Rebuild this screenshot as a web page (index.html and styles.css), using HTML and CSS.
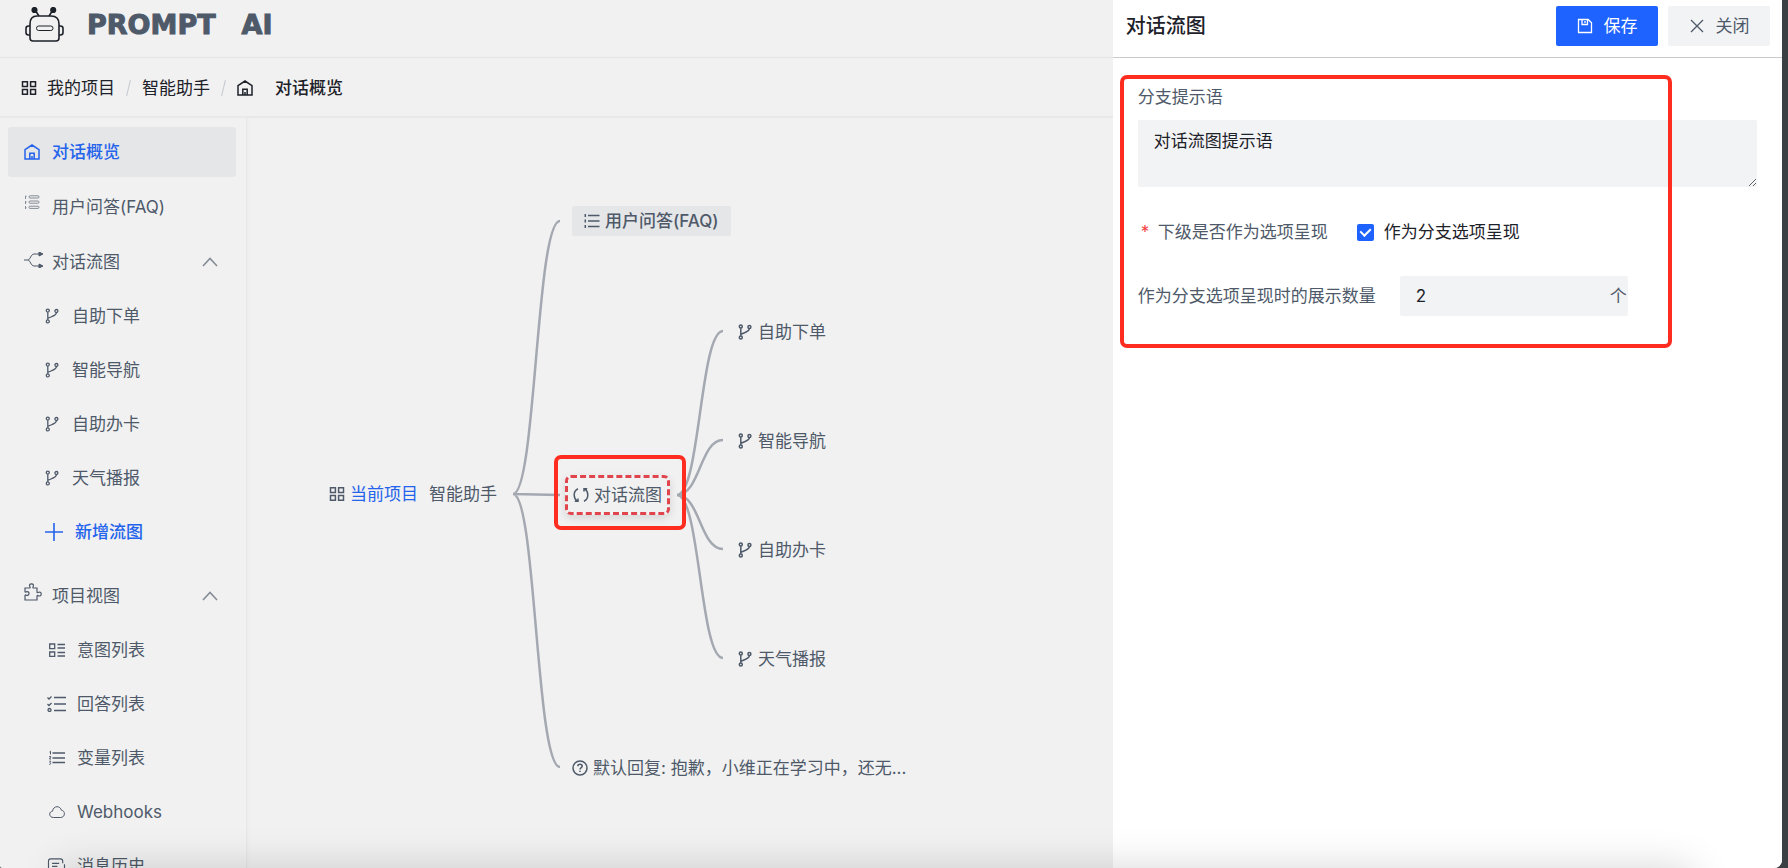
FILE: index.html
```html
<!DOCTYPE html>
<html lang="zh-CN">
<head>
<meta charset="utf-8">
<title>对话概览 - PROMPT AI</title>
<link rel="stylesheet" href="styles.css">
</head>
<body>
<svg class="defs" aria-hidden="true">
  <symbol id="i-home" viewBox="0 0 16 16"><path d="M1 5.6 8 1l7 4.6V15H1zM5.8 15V9.2h4.4V15M8 12v3"/></symbol>
  <symbol id="i-apps" viewBox="0 0 16 16"><path d="M1.5 1.7h4.9v4.9H1.5zM9.6 1.7h4.9v4.9H9.6zM1.5 9.4h4.9v4.9H1.5zM9.6 9.4h4.9v4.9H9.6z"/></symbol>
  <symbol id="i-branch" viewBox="0 0 16 16"><circle cx="3.8" cy="2.6" r="1.5"/><circle cx="3.8" cy="13.4" r="1.5"/><circle cx="12.4" cy="3" r="1.5"/><path d="M3.8 4.2v7.6M12.4 4.6C12.4 8 7 8.600 3.8 10.400"/></symbol>
  <symbol id="i-up" viewBox="0 0 16 16"><path d="m1 12 7-7.500 7 7.500"/></symbol>
  <symbol id="i-list" viewBox="0 0 16 16"><path d="M4 2.500h11.500M4 8h11.500M4 13.500h11.500M1.300 1v3M1.300 6.500v3M1.300 12v3"/></symbol>
</svg>
<div class="app">
  <header class="top">
    <svg class="robot" viewBox="0 0 40 36" aria-hidden="true">
      <path d="M10 3l4 6M28 3l-4 6" /><circle class="solid" cx="9.500" cy="3" r="2.300"/><circle class="solid" cx="28.200" cy="3" r="2.300"/>
      <path d="M12 9h14c5 0 8 3 8 8v14c0 2-1 3-3 3H8c-2 0-3-1-3-3V17c0-5 2.500-8 7-8z"/>
      <path d="M5 19H3.500C1.800 19 1 20 1 21.500v4C1 27.500 2 28 3.500 28H5M34 19h1.500c1.700 0 2.500 1 2.500 2.500v4c0 2-1 2.500-2.500 2.500H34"/>
      <rect class="thin" x="11.500" y="19" width="16.500" height="4.500" rx="2.200"/>
    </svg>
    <span class="brand"><span>PROMPT</span><span>AI</span></span>
  </header>
  <nav class="crumbs" aria-label="路径">
    <svg class="ic"><use href="#i-apps"/></svg>
    <a href="#projects">我的项目</a><i class="sep"></i><a href="#assistant">智能助手</a><i class="sep"></i>
    <svg class="ic home"><use href="#i-home"/></svg>
    <strong>对话概览</strong>
  </nav>
  <div class="work">
    <nav class="side" aria-label="菜单">
      <a class="item active" href="#overview"><svg class="ic"><use href="#i-home"/></svg>对话概览</a>
      <a class="item" href="#faq"><svg class="ic raised soft" viewBox="0 0 16 16"><path d="M1 1.200h1.500M1 7h1.500M1 12.800h1.500"/><path d="M1.500 1v3M1.500 6v3M1.500 11v3"/><rect x="5" y=".800" width="10" height="2.200" rx="1"/><rect x="5" y="6" width="10" height="2.200" rx="1"/><rect x="5" y="11.200" width="10" height="2.200" rx="1"/></svg>用户问答(FAQ)</a>
      <button class="item" type="button"><svg class="ic raised flow" viewBox="0 0 20 16"><path d="M0 8h4c2 0 3-6 6-6h6M4 8c2 0 3 6 6 6h6"/><path class="solid" d="M15 0l4 2-4 2zM15 12l4 2-4 2z"/></svg>对话流图<svg class="chev"><use href="#i-up"/></svg></button>
      <div class="sub">
        <a class="item" href="#f1"><svg class="ic"><use href="#i-branch"/></svg>自助下单</a>
        <a class="item" href="#f2"><svg class="ic"><use href="#i-branch"/></svg>智能导航</a>
        <a class="item" href="#f3"><svg class="ic"><use href="#i-branch"/></svg>自助办卡</a>
        <a class="item" href="#f4"><svg class="ic"><use href="#i-branch"/></svg>天气播报</a>
        <button class="item add" type="button"><svg class="ic plus" viewBox="0 0 18 18"><path d="M9 0v18M0 9h18"/></svg>新增流图</button>
      </div>
      <button class="item" type="button"><svg class="ic raised puzzle" viewBox="0 0 18 18"><path d="M1 5h4.500c.6 0 .8-.4.500-1C5 2 5.500.800 7.500.800S10 2 9 4c-.3.600-.1 1 .5 1H13v4c0 .6.400.800 1 .500 2-.8 3.200-.2 3.200 1.500s-1.200 2.500-3.200 1.600c-.6-.3-1-.1-1 .5V17H1v-4.500c0-.6.400-.7 1-.4 1.800.7 3-.1 3-1.600S3.800 8.200 2 8.900c-.6.300-1 .1-1-.5z"/></svg>项目视图<svg class="chev"><use href="#i-up"/></svg></button>
      <div class="sub views">
        <a class="item" href="#v1"><svg class="ic" viewBox="0 0 16 16"><path d="M.700 2h5v4.600h-5zM.700 10h5v4.300h-5zM8.500 2.500H16M8.500 6H16M8.500 10.500H16M8.500 14H16"/></svg>意图列表</a>
        <a class="item" href="#v2"><svg class="ic wide" viewBox="0 0 19 16"><path d="m.5 1.500 1.500 1.500L4.500.500M.5 8l1.500 1.500L4.500 7M7 1.500h12M7 8h12M7 14.500h12"/><circle cx="2.500" cy="14" r="1.500"/></svg>回答列表</a>
        <a class="item" href="#v3"><svg class="ic" viewBox="0 0 16 16"><path d="M3.500 3H16M3.500 8H16M3.500 12.500H16"/><path class="thin" d="M.5 2l1-.8V4.500M.3 6.500h1.500L.5 9H2M.3 11.200h1.500l-.8 1.300.8 1.200L.3 14.500"/></svg>变量列表</a>
        <a class="item" href="#v4"><svg class="ic thin" viewBox="0 0 16 16"><path d="M4.500 13.500C2 13.500.700 12 .700 10.200s1.500-3 2.800-3C4 4.300 5.800 2.700 8 2.700c2.300 0 3.800 1.500 4.400 3.500 1.900.3 3 1.700 3 3.500 0 2.200-1.600 3.800-3.900 3.800z"/></svg>Webhooks</a>
        <a class="item" href="#v5"><svg class="ic wide" viewBox="0 0 20 18"><path d="M17 6V3.500c0-1.500-.8-2.500-2.500-2.500h-11C1.800 1 1 2 1 3.500v11C1 16 1.800 17 3.500 17h10M5 6h8M5 9.500h6M19 7v10"/></svg>消息历史</a>
      </div>
    </nav>
    <main class="canvas">
      <svg class="links" aria-hidden="true"><g transform="translate(-247 -118)">
        <path d="M513 494C536 494 536 221 560 221M513 494L560 495M513 494C536 494 536 767 560 767"/>
        <path d="M677 495C700 495 700 331 723 331M677 495C700 495 700 440 723 440M677 495C700 495 700 549 723 549M677 495C700 495 700 658 723 658"/>
      </g></svg>
      <div class="node root"><svg class="ic"><use href="#i-apps"/></svg><a href="#project">当前项目</a><span>智能助手</span></div>
      <div class="node faq"><svg class="ic"><use href="#i-list"/></svg>用户问答(FAQ)</div>
      <div class="node flowmap"><svg class="ic" viewBox="0 0 16 16"><path d="M5 1.800C2.300 3 1.200 5.500 1.200 8s1 4.500 2.800 5.800M1.800 14.200H5v-2.700M11 14.200c2.700-1.200 3.800-3.700 3.800-6.200s-1-4.500-2.800-5.800M14.200 1.800H11v2.700"/></svg>对话流图</div>
      <div class="node leaf n1"><svg class="ic"><use href="#i-branch"/></svg>自助下单</div>
      <div class="node leaf n2"><svg class="ic"><use href="#i-branch"/></svg>智能导航</div>
      <div class="node leaf n3"><svg class="ic"><use href="#i-branch"/></svg>自助办卡</div>
      <div class="node leaf n4"><svg class="ic"><use href="#i-branch"/></svg>天气播报</div>
      <div class="node fallback"><svg class="ic" viewBox="0 0 16 16"><circle cx="8" cy="8" r="7"/><path d="M5.800 6.300C5.800 5 6.700 4.300 8 4.300s2.200.8 2.200 1.900C10.200 7.600 8 7.600 8 9.400M8 10.700v1.300"/></svg>默认回复: 抱歉，小维正在学习中，还无...</div>
      <div class="mark mark-node"></div>
    </main>
  </div>
  <aside class="drawer">
    <div class="drawer-head">
      <h2>对话流图</h2>
      <button class="btn primary" type="button"><svg class="ic" viewBox="0 0 16 16"><path d="M1.500 1.500h9.700l3.300 3.300v9.700h-13zM5 1.500v5h5.500v-5M8 3v2"/></svg>保存</button>
      <button class="btn" type="button"><svg class="ic" viewBox="0 0 16 16"><path d="m2 2 12 12M14 2 2 14"/></svg>关闭</button>
    </div>
    <form class="form">
      <label class="label" for="prompt">分支提示语</label>
      <textarea id="prompt">对话流图提示语</textarea>
      <div class="row check">
        <span class="star">*</span><span class="label">下级是否作为选项呈现</span>
        <input id="asopt" type="checkbox" checked><label for="asopt">作为分支选项呈现</label>
      </div>
      <div class="row">
        <label class="label" for="count">作为分支选项呈现时的展示数量</label>
        <div class="num"><input id="count" type="text" inputmode="numeric" value="2"><span>个</span></div>
      </div>
    </form>
    <div class="mark mark-form"></div>
  </aside>
  <div class="shade"></div>
</div>
</body>
</html>
```

FILE: styles.css
```css
* { box-sizing: border-box; }
html, body { height: 100%; margin: 0; }
body {
  background: #3b4043;
  color: #4e5969;
  font: 17px/26px Inter, "Noto Sans CJK SC", sans-serif;
  overflow: hidden;
}
a { color: inherit; text-decoration: none; }
button, input, textarea { font: inherit; color: inherit; border: 0; margin: 0; }
h2 { margin: 0; }
svg { fill: none; stroke: currentColor; stroke-width: 1.3; flex: none; }
.solid { fill: currentColor; }
.thin { stroke-width: 1; }
.defs { position: absolute; width: 0; height: 0; }
.ic { width: 16px; height: 16px; }

.app {
  position: relative;
  display: flex;
  flex-direction: column;
  height: 100%;
  margin-right: 6px;
  background: #f1f1f1;
  border-radius: 0 0 8px 2px;
  overflow: hidden;
}
.top {
  display: flex;
  align-items: center;
  gap: 22px;
  height: 58px;
  padding: 0 25px 8px;
  border-bottom: 1px solid #e4e5e6;
}
.robot { width: 40px; height: 36px; color: #1d2129; stroke-width: 1.6; }
.brand {
  display: flex;
  gap: 26px;
  font: bold 27px/32px "DejaVu Sans", sans-serif;
  -webkit-text-stroke: 1px currentColor;
}
.crumbs {
  display: flex;
  align-items: center;
  height: 60px;
  padding: 2px 21px 0;
  border-bottom: 2px solid #e8e8e9;
  color: #1d2129;
}
.crumbs .ic { margin-right: 10px; stroke-width: 1.5; }
.crumbs .home { margin-right: 22px; }
.crumbs strong { font-weight: 500; }
.sep { width: 1px; height: 16px; margin: 0 13px; background: #c3c7ce; transform: rotate(14deg); }

.work { display: flex; flex: 1; min-height: 0; }
.side {
  flex: none;
  width: 247px;
  padding: 9px 10px 0 8px;
  border-right: 1px solid #e8e8e9;
  box-shadow: 1px 0 3px #e9e9ea;
  overflow: hidden;
}
.item {
  display: flex;
  align-items: center;
  width: 100%;
  height: 50px;
  margin-bottom: 5px;
  padding: 0 16px;
  border-radius: 3px;
  background: none;
  text-align: left;
}
.item .ic { margin-right: 12px; }
.item .raised { margin-bottom: 8px; }
.item .soft { stroke-width: 1; color: #858c96; }
.item .flow { width: 20px; margin-right: 8px; margin-bottom: 5px; stroke-width: 1; }
.item .puzzle { width: 18px; height: 18px; margin-right: 10px; stroke-width: 1.2; }
.active { background: #e5e6e8; color: #2463eb; font-weight: 500; }
.active .ic { stroke-width: 1.5; }
.chev { width: 16px; height: 16px; margin-left: auto; margin-right: 2px; stroke-width: 1.6; color: #858c96; }
.sub { margin: -1px 0 14px; }
.sub .item { margin-bottom: 4px; padding-left: 36px; }
.sub .add { padding-left: 37px; color: #2463eb; font-weight: 500; }
.add .plus { width: 18px; height: 18px; stroke-width: 1.6; }
.views .item { margin-bottom: 4px; padding-left: 41px; }
.views .wide { width: 19px; margin-left: -2px; margin-right: 11px; }

.canvas { position: relative; flex: 1; min-width: 0; }
.links { position: absolute; left: 0; top: 0; width: 100%; height: 100%; stroke: #a4a8b1; stroke-width: 2.5; }
.node {
  position: absolute;
  display: flex;
  align-items: center;
  gap: 5px;
  height: 30px;
  white-space: nowrap;
}
.node .ic { stroke-width: 1.5; }
.root { left: 82px; top: 361px; }
.root a { color: #2463eb; margin-right: 6px; }
.faq { left: 325px; top: 88px; padding: 0 12px; border-radius: 2px; background: #e5e6e8; font-weight: 500; }
.flowmap {
  left: 318px;
  top: 357px;
  height: 40px;
  padding: 0 5px;
  border: 3px dashed #e0454e;
  border-radius: 6px;
  box-shadow: 0 3px 8px rgba(0, 0, 0, .12);
}
.leaf { left: 490px; }
.n1 { top: 199px; }
.n2 { top: 308px; }
.n3 { top: 417px; }
.n4 { top: 526px; }
.fallback { left: 325px; top: 635px; }
.mark { position: absolute; border: 4px solid #ff2d20; border-radius: 7px; pointer-events: none; }
.mark-node { left: 307px; top: 337px; width: 132px; height: 75px; }

.drawer {
  position: absolute;
  top: 0;
  right: 0;
  bottom: 0;
  width: 37.55%;
  background: #fff;
  color: #1d2129;
}
.drawer-head {
  display: flex;
  align-items: center;
  gap: 10px;
  height: 58px;
  padding: 0 12px 5px 13px;
  border-bottom: 1px solid #c9cacc;
}
.drawer-head h2 { flex: 1; font-size: 20px; font-weight: 500; }
.btn {
  display: flex;
  align-items: center;
  justify-content: center;
  gap: 11px;
  width: 102px;
  height: 40px;
  padding: 0;
  border-radius: 2px;
  background: #f2f3f5;
  color: #4e5969;
}
.primary { background: #1e62ff; color: #fff; }
.form { display: flex; flex-direction: column; padding: 26px 25px; }
.label { color: #4e5969; }
textarea {
  height: 67px;
  margin: 10px 0 25px;
  padding: 8px 16px;
  border-radius: 2px;
  background: #f2f3f5;
  color: #1d2129;
  resize: vertical;
}
.row { display: flex; align-items: center; gap: 24px; height: 40px; }
.check { gap: 8px; margin-bottom: 24px; padding-left: 3px; }
.star { color: #f53f3f; width: 9px; }
input[type="checkbox"] {
  appearance: none;
  width: 17px;
  height: 17px;
  margin: 0 2px 0 21px;
  border-radius: 2px;
  background: #1e62ff;
  display: grid;
  place-items: center;
}
input[type="checkbox"]:checked::after {
  content: "";
  width: 5px;
  height: 8px;
  margin-bottom: 2px;
  border: solid #fff;
  border-width: 0 2px 2px 0;
  transform: rotate(45deg);
}
.num { display: flex; align-items: center; width: 228px; height: 40px; border-radius: 2px; background: #f2f3f5; }
.num input { flex: 1; min-width: 0; padding: 0 16px; background: none; outline: 0; }
.num input { color: #1d2129; }
.num span { color: #4e5969; margin-right: 1px; }
.mark-form { left: 7px; top: 75px; width: 552px; height: 273px; }
.shade {
  position: absolute;
  left: 60px;
  right: 90px;
  top: 100%;
  height: 60px;
  box-shadow: 0 0 40px rgba(0, 0, 0, .16);
}
```
